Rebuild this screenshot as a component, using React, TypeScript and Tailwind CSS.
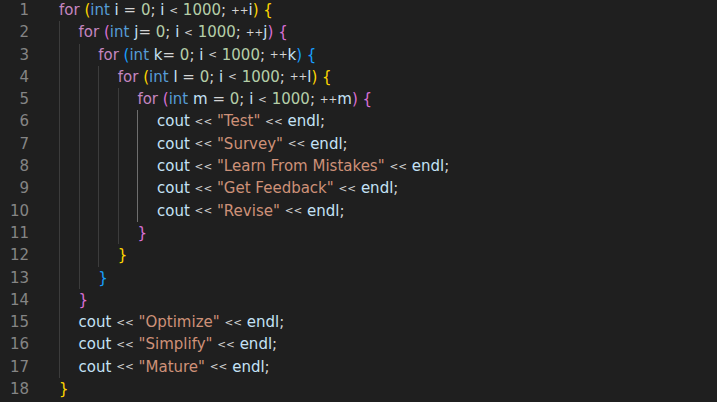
const GOLD = 'text-[#ffd700]';
const ORCHID = 'text-[#da70d6]';
const BLUE = 'text-[#179fff]';

type Line = { indent: number; code: string; bracket: string };

const LINES: Line[] = [
  { indent: 0, code: 'for (int i = 0; i < 1000; ++i) {', bracket: GOLD },
  { indent: 1, code: 'for (int j= 0; i < 1000; ++j) {', bracket: ORCHID },
  { indent: 2, code: 'for (int k= 0; i < 1000; ++k) {', bracket: BLUE },
  { indent: 3, code: 'for (int l = 0; i < 1000; ++l) {', bracket: GOLD },
  { indent: 4, code: 'for (int m = 0; i < 1000; ++m) {', bracket: ORCHID },
  { indent: 5, code: 'cout << "Test" << endl;', bracket: GOLD },
  { indent: 5, code: 'cout << "Survey" << endl;', bracket: GOLD },
  { indent: 5, code: 'cout << "Learn From Mistakes" << endl;', bracket: GOLD },
  { indent: 5, code: 'cout << "Get Feedback" << endl;', bracket: GOLD },
  { indent: 5, code: 'cout << "Revise" << endl;', bracket: GOLD },
  { indent: 4, code: '}', bracket: ORCHID },
  { indent: 3, code: '}', bracket: GOLD },
  { indent: 2, code: '}', bracket: BLUE },
  { indent: 1, code: '}', bracket: ORCHID },
  { indent: 1, code: 'cout << "Optimize" << endl;', bracket: GOLD },
  { indent: 1, code: 'cout << "Simplify" << endl;', bracket: GOLD },
  { indent: 1, code: 'cout << "Mature" << endl;', bracket: GOLD },
  { indent: 0, code: '}', bracket: GOLD },
];

const TOKEN = /(for|int)\b|(\d+)|("[^"]*")|([(){}])|([<+])|([A-Za-z_]\w*)|(\s+)|(.)/g;

function Tokens({ code, bracket }: { code: string; bracket: string }) {
  const out: React.ReactNode[] = [];
  let m: RegExpExecArray | null;
  let k = 0;
  TOKEN.lastIndex = 0;
  while ((m = TOKEN.exec(code))) {
    const t = m[0];
    let cls = 'text-[#d4d4d4]';
    if (m[1]) cls = t === 'for' ? 'text-[#c586c0]' : 'text-[#569cd6]';
    else if (m[2]) cls = 'text-[#b5cea8]';
    else if (m[3]) cls = 'text-[#ce9178]';
    else if (m[4]) cls = bracket;
    else if (m[5]) cls = 'relative -top-[1.5px] text-[10.5px] text-[#d4d4d4]';
    else if (m[6]) cls = 'text-[#c4e2f6]';
    out.push(
      <span key={k++} className={cls}>
        {t}
      </span>
    );
  }
  return <>{out}</>;
}

export default function App() {
  return (
    <div
      className="h-[402px] w-[717px] overflow-hidden bg-[#1f1f1f] text-[15px]"
      style={{ fontFamily: '"DejaVu Sans", sans-serif' }}
    >
      <div className="-mt-px">
        {LINES.map((line, i) => (
          <div key={i} className="flex h-[22.3px] items-stretch leading-[22.3px]">
            {/* gutter */}
            <div className="w-[29px] shrink-0 text-right text-[#858585]">{i + 1}</div>
            <div className="ml-[30px] flex items-stretch whitespace-pre">
              {/* indent guides */}
              {Array.from({ length: line.indent }).map((_, g) => (
                <span
                  key={g}
                  className={`w-[19.6px] shrink-0 border-l ${
                    g === 4 ? 'border-[#6e6e6e]' : 'border-[#3c3c3c]'
                  }`}
                />
              ))}
              <span>
                <Tokens code={line.code} bracket={line.bracket} />
              </span>
            </div>
          </div>
        ))}
      </div>
    </div>
  );
}
